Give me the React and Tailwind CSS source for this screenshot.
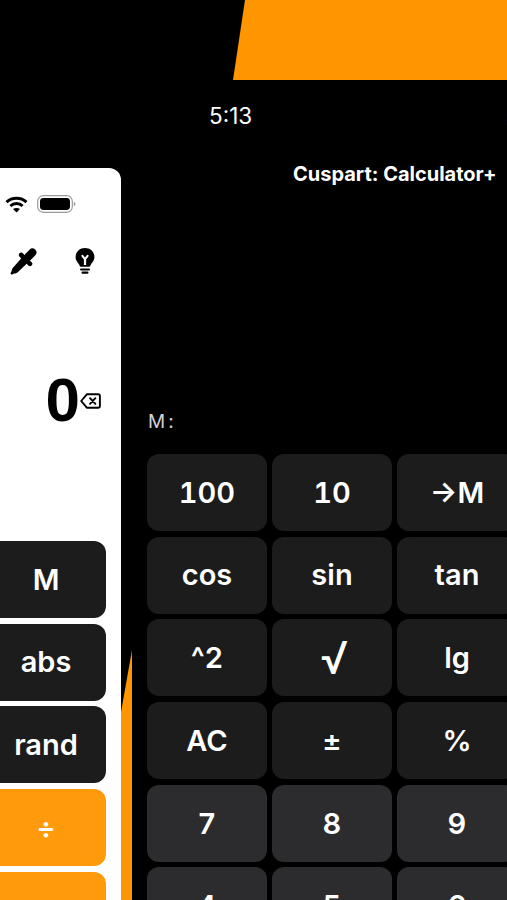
import React from "react";

const rightKeys = [
  ["100", "10", "→M"],
  ["cos", "sin", "tan"],
  ["^2", "√", "lg"],
  ["AC", "±", "%"],
  ["7", "8", "9"],
  ["4", "5", "6"],
];

const leftKeys = ["M", "abs", "rand", "÷", "×"];

function Wifi() {
  return (
    <svg width="23" height="17" viewBox="0 0 23 17" fill="none" stroke="#000" strokeWidth="3">
      <path d="M1.5 6.2 C7 1 16 1 21.5 6.2" />
      <path d="M5.4 10 C8.8 6.8 14.2 6.8 17.6 10" />
      <path d="M11.5 16.6 L8 13 C10 11.5 13 11.5 15 13 Z" fill="#000" stroke="none" />
    </svg>
  );
}

function Battery() {
  return (
    <svg width="39" height="18" viewBox="0 0 39 18" fill="none">
      <rect x="0.7" y="0.7" width="34.6" height="16.6" rx="5.5" stroke="#9a9a9a" strokeWidth="1.2" />
      <rect x="3" y="3" width="30" height="12" rx="3.4" fill="#000" />
      <path d="M36.8 6.8 C38 7.2 38.4 8 38.4 9 C38.4 10 38 10.8 36.8 11.2 Z" fill="#9a9a9a" />
    </svg>
  );
}

function Dropper() {
  return (
    <svg width="27" height="27" viewBox="0 0 27 27" fill="#000">
      <path d="M18 9 L22.4 4.4" stroke="#000" strokeWidth="8" strokeLinecap="round" />
      <path d="M11.2 7 L20 15.8" stroke="#000" strokeWidth="4.6" strokeLinecap="round" />
      <path d="M12 9.6 L17.4 15 L7.8 24.2 C6.8 25.2 5.4 25.4 4.2 25.6 L1.6 26.8 L0.4 25.6 L1.6 23 C1.8 21.8 2.2 20.4 3.2 19.4 Z" />
    </svg>
  );
}

function Bulb() {
  return (
    <svg width="20" height="26" viewBox="0 0 20 26" fill="#000">
      <path
        fillRule="evenodd"
        d="M10 0 C15.4 0 19.4 3.8 19.4 9 C19.4 13 16.6 14.8 15.4 17.4 C15 18.4 14.6 18.8 13.6 18.8 L6.4 18.8 C5.4 18.8 5 18.4 4.6 17.4 C3.4 14.8 0.6 13 0.6 9 C0.6 3.8 4.6 0 10 0 Z M8.9 17 L11.1 17 L11.1 11.4 L13.4 8.4 C13.9 7.6 13.5 6.8 12.7 6.8 C12.2 6.8 11.9 7.1 11.6 7.5 L10 9.6 L8.4 7.5 C8.1 7.1 7.8 6.8 7.3 6.8 C6.5 6.8 6.1 7.6 6.6 8.4 L8.9 11.4 Z"
      />
      <rect x="5" y="20.4" width="10" height="2.2" rx="1.1" />
      <rect x="6.5" y="23.6" width="7" height="2.2" rx="1.1" />
    </svg>
  );
}

function Backspace() {
  return (
    <svg width="21" height="16" viewBox="0 0 21 16" fill="none" stroke="#000" strokeWidth="1.9" strokeLinejoin="round">
      <path d="M7 1.2 L18 1.2 C19.2 1.2 19.9 1.9 19.9 3 L19.9 13 C19.9 14.1 19.2 14.8 18 14.8 L7 14.8 L1.2 8 Z" />
      <path d="M10 5.2 L15.4 10.8 M15.4 5.2 L10 10.8" strokeLinecap="round" />
    </svg>
  );
}

export default function App() {
  return (
    <div className="w-[507px] h-[900px] overflow-hidden bg-black font-['Inter',sans-serif]">
      {/* banner */}
      <div className="h-20 ml-[233px] bg-[#ff9500] [clip-path:polygon(12px_0,100%_0,100%_100%,0_100%)]" />

      <div className="flex h-[820px]">
        {/* left phone */}
        <div className="w-[121px] shrink-0 mt-[88px] bg-white rounded-tr-[12px] overflow-hidden">
          <div className="flex items-center h-[18px] mt-[27px] pl-[5px] gap-[9px]">
            <Wifi />
            <Battery />
          </div>
          <div className="flex items-start mt-[35px] pl-[10px] gap-[38px]">
            <Dropper />
            <Bulb />
          </div>
          <div className="flex items-center justify-end h-[54px] mt-[98px] pr-[20px] gap-0">
            <span className="text-[62px] leading-none font-bold text-black font-['Liberation_Sans',sans-serif]">0</span>
            <span className="mt-[2px]">
              <Backspace />
            </span>
          </div>
          <div className="flex flex-col gap-[5.7px] mt-[114px] -ml-[14px] w-[120px]">
            {leftKeys.map((k, i) => (
              <div
                key={k}
                className={
                  i > 2
                    ? "h-[77px] shrink-0 rounded-[12px] bg-[#ff9a0c] text-white flex items-center justify-center text-[29px] font-semibold"
                    : "h-[77px] shrink-0 rounded-[12px] bg-[#1c1c1c] text-white flex items-center justify-center text-[29px] font-semibold"
                }
              >
                {k}
              </div>
            ))}
          </div>
        </div>

        {/* orange sliver */}
        <div className="w-[11px] shrink-0 mt-[570px] h-[250px] bg-[#ff9500] [clip-path:polygon(100%_0,100%_100%,0_100%,0_62px)]" />

        {/* right phone */}
        <div className="ml-[15px] w-[360px] shrink-0">
          <div className="mt-[25px] ml-[62px] h-[22px] whitespace-nowrap text-[22.5px] leading-[22px] font-normal text-white">
            5:13
            <span className="ml-[253px] text-[#555555]">5:13</span>
          </div>
          <div className="mt-[36px] ml-[146px] whitespace-nowrap text-[20px] leading-[22px] font-bold text-white">Cuspart: Calculator+</div>
          <div className="mt-[227px] h-[20px] pl-px text-[19px] leading-[20px] tracking-[3px] text-[#d0d0d0]">M:</div>
          <div className="grid grid-cols-[repeat(3,120px)] gap-x-[5px] gap-y-[5.7px] mt-[22px]">
            {rightKeys.flat().map((k, i) => (
              <div
                key={k}
                className={
                  i >= 12
                    ? "h-[77px] rounded-[12px] bg-[#2c2c2e] text-white flex items-center justify-center text-[29px] font-semibold tabular-nums"
                    : k === "√"
                      ? "h-[77px] rounded-[12px] bg-[#1c1c1c] text-white flex items-center justify-center pl-[5px] text-[45px] font-normal"
                      : "h-[77px] rounded-[12px] bg-[#1c1c1c] text-white flex items-center justify-center text-[29px] font-semibold tabular-nums"
                }
              >
                {k}
              </div>
            ))}
          </div>
        </div>
      </div>
    </div>
  );
}
